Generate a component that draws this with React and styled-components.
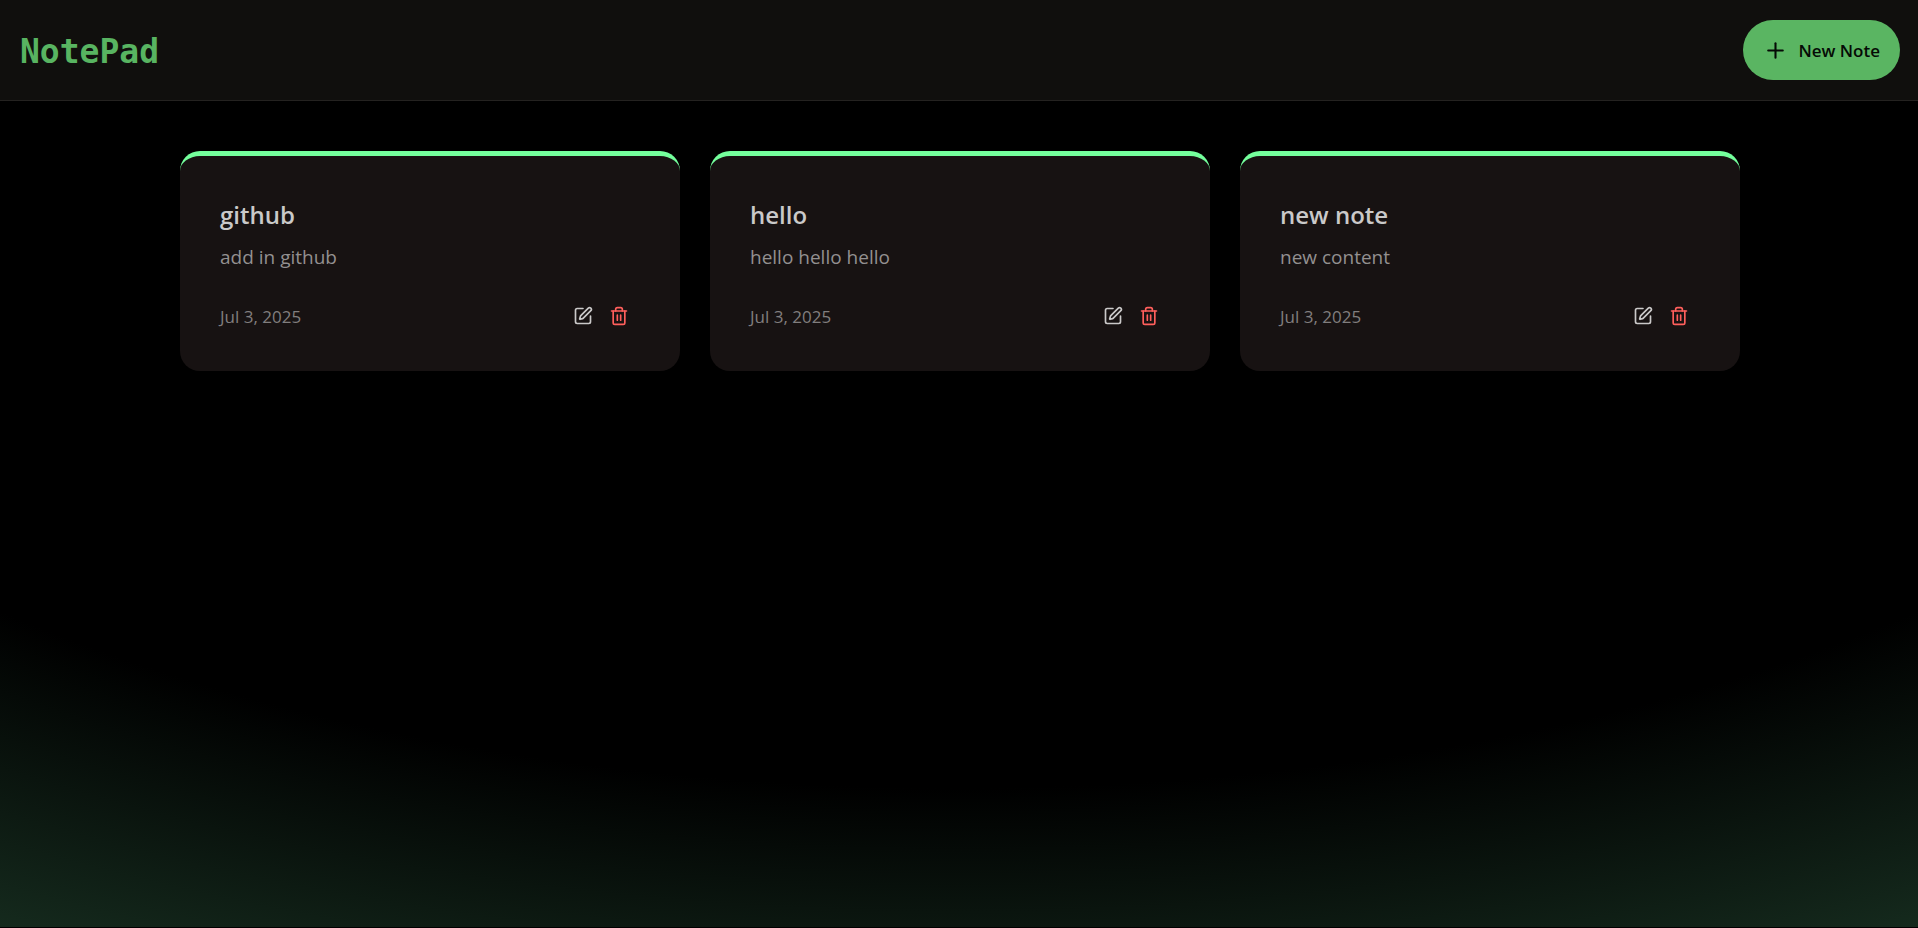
import React from "react";
import styled, { createGlobalStyle } from "styled-components";
import { Plus, SquarePen } from "lucide-react";

const GlobalStyle = createGlobalStyle`
  *, *::before, *::after { box-sizing: border-box; }
  html { height: 100%; background: #171212; }
  body {
    margin: 0;
    min-height: 100vh;
    font-family: "Segoe UI", "Open Sans", "Noto Sans", sans-serif;
    color: #cac9c9;
  }
  h1, h2, p { margin: 0; }
`;

const Page = styled.div`
  min-height: 100vh;
  display: flex;
  flex-direction: column;
  border-bottom: 1px solid #000;
  background: radial-gradient(125% 125% at 50% 10%, #000 60%, #50f59a40 100%);
`;

const Header = styled.header`
  display: flex;
  align-items: center;
  justify-content: space-between;
  padding: 20px 18px 20px 20px;
  background: #100f0d;
  border-bottom: 1px solid #242220;
`;

const Logo = styled.h1`
  padding-top: 3px;
  font-family: Consolas, "DejaVu Sans Mono", monospace;
  font-size: 33px;
  line-height: 40px;
  font-weight: 700;
  color: #58b461;
`;

const NewNoteButton = styled.button`
  display: inline-flex;
  align-items: center;
  gap: 10px;
  height: 60px;
  padding: 0 20px;
  border: 0;
  border-radius: 30px;
  background: #5ab562;
  color: #050a05;
  font-family: inherit;
  font-size: 17px;
  font-weight: 600;
  cursor: pointer;
`;

const Notes = styled.main`
  width: 100%;
  max-width: 1600px;
  margin: 0 auto;
  padding: 50px 19px 50px 21px;
  display: grid;
  grid-template-columns: repeat(auto-fit, minmax(400px, 1fr));
  gap: 30px;
`;

const Card = styled.article`
  display: flex;
  flex-direction: column;
  padding: 40px 40px 37px;
  border-top: 5px solid #74ff9c;
  border-radius: 20px;
  background: #171212;
`;

const Title = styled.h2`
  font-size: 24px;
  line-height: 38px;
  font-weight: 600;
`;

const Content = styled.p`
  margin-top: 6px;
  font-size: 19px;
  line-height: 35px;
  color: #939090;
`;

const Footer = styled.footer`
  display: flex;
  align-items: center;
  justify-content: space-between;
  margin-top: 24px;
`;

const DateText = styled.time`
  font-size: 17px;
  line-height: 35px;
  color: #817e7e;
`;

const Actions = styled.div`
  display: flex;
  align-items: center;
`;

const IconButton = styled.button`
  display: inline-flex;
  padding: 7px 11px 8px 5px;
  border: 0;
  background: transparent;
  color: ${(p) => (p.$danger ? "#ff5f5c" : "#cac9c9")};
  cursor: pointer;
`;

const TrashIcon = () => (
  <svg width="20" height="20" viewBox="0 0 24 24" fill="none" stroke="currentColor" strokeWidth="2" strokeLinecap="round" strokeLinejoin="round" aria-hidden="true">
    <path d="M3 6h18" />
    <path d="M19 6v14c0 1-1 2-2 2H7c-1 0-2-1-2-2V6" />
    <path d="M8 6V4c0-1 1-2 2-2h4c1 0 2 1 2 2v2" />
    <path d="M10 11v6M14 11v6" />
  </svg>
);

const notes = [
  { title: "github", content: "add in github" },
  { title: "hello", content: "hello hello hello" },
  { title: "new note", content: "new content" },
];

export default function App() {
  return (
    <Page>
      <GlobalStyle />
      <Header>
        <Logo>NotePad</Logo>
        <NewNoteButton type="button">
          <Plus size={25} strokeWidth={2} aria-hidden="true" />
          New Note
        </NewNoteButton>
      </Header>
      <Notes>
        {notes.map((note) => (
          <Card key={note.title}>
            <Title>{note.title}</Title>
            <Content>{note.content}</Content>
            <Footer>
              <DateText dateTime="2025-07-03">Jul 3, 2025</DateText>
              <Actions>
                <IconButton type="button" aria-label={`Edit ${note.title}`}>
                  <SquarePen size={20} aria-hidden="true" />
                </IconButton>
                <IconButton type="button" $danger aria-label={`Delete ${note.title}`}>
                  <TrashIcon />
                </IconButton>
              </Actions>
            </Footer>
          </Card>
        ))}
      </Notes>
    </Page>
  );
}
